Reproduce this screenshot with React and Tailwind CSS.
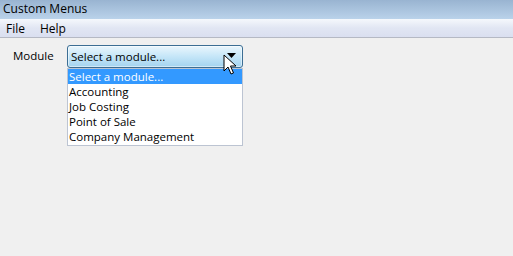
const items = ["Select a module...", "Accounting", "Job Costing", "Point of Sale", "Company Management"];

const Cursor = () => (
  <svg width="14" height="22" viewBox="0 0 14 22" className="absolute left-[156px] top-[9px]">
    <path d="M1 1 L1 17 L5 13 L8 20 L10.5 19 L7.5 12 L13 12 Z" fill="#fff" stroke="#000" strokeWidth="1" strokeLinejoin="miter" />
  </svg>
);

export default function App() {
  return (
    <div className="w-[513px] h-[256px] bg-[#f0f0f0] flex flex-col font-['Open_Sans','Noto_Sans',sans-serif] text-[11.5px] text-black overflow-hidden">
      <div className="h-[19px] bg-gradient-to-b from-[#99b4d1] to-[#bad2ea] px-[3px] leading-[17px] text-[12px]">Custom Menus</div>
      <div className="h-[19px] bg-gradient-to-b from-[#f5f8fc] via-[#e1e6f3] to-[#dadff0] border-b border-[#b5b9c4] flex items-center gap-[15px] px-[6px] leading-[17px] text-[12px]">
        <span>File</span>
        <span>Help</span>
      </div>
      <div className="flex pt-[7px] pl-[13px]">
        <div className="w-[54px] pt-[3px] leading-[15px]">Module</div>
        <div className="relative w-[176px]">
          <div className="h-[23px] border border-[#3c6e94] rounded-[3px] bg-gradient-to-b from-[#eaf6fd] via-[#c5e6f8] to-[#a3d3ef] flex items-center px-[3px] justify-between shadow-[inset_0_0_0_1px_rgba(255,255,255,0.5)]">
            <span className="leading-[15px]">Select a module...</span>
            <svg width="9" height="5" viewBox="0 0 9 5" className="mr-[3px] mb-[2px]">
              <path d="M0 0 H9 L4.5 5 Z" fill="#000" />
            </svg>
          </div>
          <div className="border border-[#bcc4d2] bg-white pb-[1px]">
            {items.map((t, i) => (
              <div key={t} className={`h-[15px] leading-[15px] px-[1px] ${i === 0 ? "bg-[#3399ff] text-white" : ""}`}>{t}</div>
            ))}
          </div>
          <Cursor />
        </div>
      </div>
    </div>
  );
}
